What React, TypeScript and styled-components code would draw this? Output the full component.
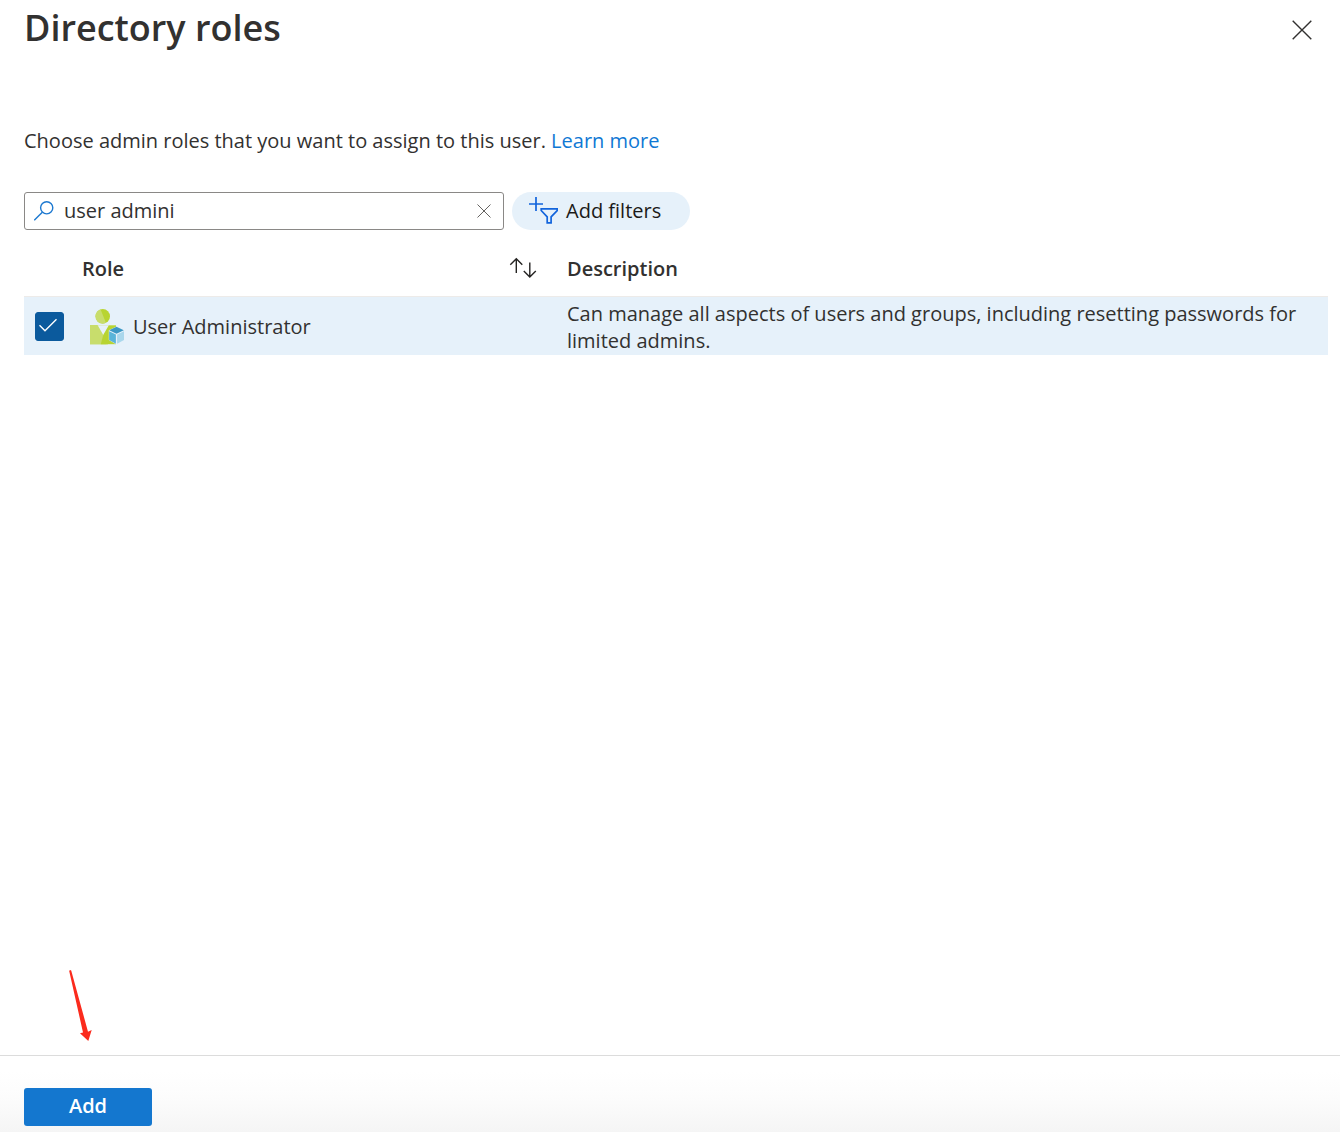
import React, { useState } from "react";
import styled, { createGlobalStyle } from "styled-components";

const GlobalStyle = createGlobalStyle`
  *, *::before, *::after { box-sizing: border-box; }
  body {
    margin: 0;
    background: #ffffff;
    color: #323130;
    font-family: "Segoe UI", "Open Sans", sans-serif;
    font-size: 20px;
    line-height: 27px;
  }
  button, input { font: inherit; color: inherit; }
`;

const Panel = styled.div`
  display: flex;
  flex-direction: column;
  min-height: 100vh;
`;

const Header = styled.header`
  display: flex;
  align-items: center;
  justify-content: space-between;
  height: 60px;
  padding: 0 24px;
`;

const Title = styled.h1`
  margin: 0;
  padding-bottom: 4px;
  font-size: 36px;
  line-height: 56px;
  font-weight: 600;
`;

const IconButton = styled.button`
  display: flex;
  align-items: center;
  justify-content: center;
  flex: none;
  width: 28px;
  height: 28px;
  padding: 0;
  border: 0;
  background: none;
  cursor: pointer;
`;

const Body = styled.main`
  flex: 1;
  padding: 67px 12px 0 24px;
`;

const Intro = styled.p`
  margin: 0 0 38px;
`;

const Link = styled.a`
  color: #0f78d4;
  text-decoration: none;
`;

const Toolbar = styled.div`
  display: flex;
  gap: 8px;
`;

const SearchBox = styled.label`
  display: flex;
  align-items: center;
  gap: 10px;
  width: 480px;
  height: 38px;
  padding: 0 5px 0 9px;
  border: 1px solid #8a8886;
  border-radius: 3px;
`;

const SearchInput = styled.input`
  flex: 1;
  min-width: 0;
  padding: 0 0 2px;
  border: 0;
  outline: 0;
  background: none;
`;

const FilterButton = styled.button`
  display: flex;
  align-items: center;
  gap: 8px;
  width: 178px;
  height: 38px;
  padding: 0 0 2px 16px;
  border: 0;
  border-radius: 19px;
  background: #e6f1fa;
  color: #1b1a19;
  cursor: pointer;
`;

const Table = styled.table`
  width: 100%;
  border-collapse: collapse;
  table-layout: fixed;
`;

const HeadCell = styled.th<{ $width?: number }>`
  width: ${(p) => (p.$width ? `${p.$width}px` : "auto")};
  height: 66px;
  padding: 0 0 14px;
  border-bottom: 1px solid #edebe9;
  vertical-align: bottom;
  text-align: left;
  font-weight: 600;
`;

const SortHead = styled.div`
  display: flex;
  align-items: center;
  justify-content: space-between;
  height: 27px;
  padding-right: 30px;
`;

const Row = styled.tr<{ $selected: boolean }>`
  background: ${(p) => (p.$selected ? "#e6f1fa" : "#ffffff")};
`;

const Cell = styled.td`
  height: 58px;
  padding: 3px 0 1px;
`;

const CheckLabel = styled.label`
  display: grid;
  width: 29px;
  height: 29px;
  margin-left: 11px;

  > * { grid-area: 1 / 1; }
  > svg { pointer-events: none; }
`;

const Checkbox = styled.input`
  appearance: none;
  width: 29px;
  height: 29px;
  margin: 0;
  border: 1px solid #0b5a9d;
  border-radius: 3px;
  cursor: pointer;
  &:checked { background: #0b5a9d; }
`;

const RoleName = styled.div`
  display: flex;
  align-items: center;
  gap: 8px;
  padding-left: 8px;
`;

const Footer = styled.footer`
  position: relative;
  padding: 32px 24px 6px;
  border-top: 1px solid #dcdcdc;
  background: linear-gradient(#ffffff 20%, #fcfcfc 55%, #f5f5f5);
`;

const AddButton = styled.button`
  display: block;
  width: 128px;
  height: 38px;
  padding: 0 0 4px;
  border: 0;
  border-radius: 3px;
  background: #1477cf;
  color: #ffffff;
  font-weight: 600;
  cursor: pointer;
`;

const Pointer = styled.svg`
  position: absolute;
  left: 68px;
  bottom: calc(100% + 13px);
`;

const CloseIcon = ({ size, color }: { size: number; color: string }) => (
  <svg width={size} height={size} viewBox="0 0 20 20" fill="none" stroke={color} strokeWidth="1.4" aria-hidden="true">
    <path d="M.7.7 19.3 19.3M19.3.7.7 19.3" />
  </svg>
);

const SearchIcon = () => (
  <svg width="20" height="20" viewBox="0 0 20 20" fill="none" stroke="#1c78d0" strokeWidth="1.4" aria-hidden="true">
    <circle cx="12.7" cy="6.8" r="6.1" />
    <path d="M8.3 11.2.3 19.2" />
  </svg>
);

const FilterIcon = () => (
  <svg width="30" height="28" viewBox="0 0 30 28" fill="none" stroke="#1264dc" strokeWidth="1.7" aria-hidden="true">
    <path d="M8 1v14M1 8h14" />
    <path d="M13.2 12.8h16v1.7l-6.1 6.4v6h-3.9v-6l-6-6.4z" />
  </svg>
);

const SortIcon = () => (
  <svg width="28" height="22" viewBox="0 0 28 22" fill="none" stroke="#242322" strokeWidth="1.4" aria-hidden="true">
    <path d="M7.3 16V2M1.3 7.8l6-6 6 6" />
    <path d="M20.8 5.5v14.2M14.8 14l6 6 6-6" />
  </svg>
);

const CheckIcon = () => (
  <svg width="29" height="29" viewBox="0 0 29 29" fill="none" stroke="#ffffff" strokeWidth="1.4" aria-hidden="true">
    <path d="M4.5 13.2 10 18.7 21.5 7.2" />
  </svg>
);

const RoleIcon = () => (
  <svg width="35" height="36" viewBox="0 0 35 36" aria-hidden="true">
    <path d="M0 16.3h26v18.9H0z" fill="#b8d432" />
    <path d="M0 16.3h7.6L13.2 26l3.2 9.2H0z" fill="#c8dd6c" />
    <path d="M13.2 26 18 35.2h-7.2z" fill="#b8d432" />
    <path d="M7.6 16.3h11.2L13.2 26z" fill="#e6f1fa" />
    <circle cx="12.8" cy="7.3" r="7.2" fill="#b8d432" />
    <path d="M10.6.5a7.2 7.2 0 1 0 5.3 13.3z" fill="#c8dd6c" />
    <path d="m26.5 17.5 7.8 3.8v9.8l-7.8 4.4-7.7-4.4v-9.8z" fill="#e6f1fa" />
    <path d="m26.5 17.8 7.3 3.5-7.3 3.5-7.3-3.5z" fill="#3c98c5" />
    <path d="m19.1 22.3 6.8 3.2v9.3l-6.8-3.9z" fill="#59b4d9" />
    <path d="m34 22.3-6.9 3.2v9.3l6.9-3.9z" fill="#a9d7ec" />
  </svg>
);

export default function App() {
  const [query, setQuery] = useState("user admini");
  const [selected, setSelected] = useState(true);

  return (
    <>
      <GlobalStyle />
      <Panel>
        <Header>
          <Title>Directory roles</Title>
          <IconButton type="button" aria-label="Close">
            <CloseIcon size={20} color="#323130" />
          </IconButton>
        </Header>
        <Body>
          <Intro>
            Choose admin roles that you want to assign to this user. <Link href="#learn-more">Learn more</Link>
          </Intro>
          <Toolbar>
            <SearchBox>
              <SearchIcon />
              <SearchInput aria-label="Search roles" value={query} onChange={(e) => setQuery(e.target.value)} />
              <IconButton type="button" aria-label="Clear search" onClick={() => setQuery("")}>
                <CloseIcon size={14} color="#605e5c" />
              </IconButton>
            </SearchBox>
            <FilterButton type="button">
              <FilterIcon />
              Add filters
            </FilterButton>
          </Toolbar>
          <Table>
            <thead>
              <tr>
                <HeadCell as="td" $width={58} />
                <HeadCell scope="col" $width={485}>
                  <SortHead>
                    Role
                    <IconButton type="button" aria-label="Sort by role">
                      <SortIcon />
                    </IconButton>
                  </SortHead>
                </HeadCell>
                <HeadCell scope="col">Description</HeadCell>
              </tr>
            </thead>
            <tbody>
              <Row $selected={selected}>
                <Cell>
                  <CheckLabel>
                    <Checkbox
                      type="checkbox"
                      aria-label="Select User Administrator"
                      checked={selected}
                      onChange={(e) => setSelected(e.target.checked)}
                    />
                    {selected && <CheckIcon />}
                  </CheckLabel>
                </Cell>
                <Cell>
                  <RoleName>
                    <RoleIcon />
                    User Administrator
                  </RoleName>
                </Cell>
                <Cell>
                  Can manage all aspects of users and groups, including resetting passwords for limited admins.
                </Cell>
              </Row>
            </tbody>
          </Table>
        </Body>
        <Footer>
          <Pointer width="26" height="74" viewBox="0 0 26 74" aria-hidden="true">
            <path d="M1.2 2 2 1l1.2.6L20 62.7l3.7-1.7-3.4 11-8.3-7.7 3-.8z" fill="#fb2b1d" />
          </Pointer>
          <AddButton type="button">Add</AddButton>
        </Footer>
      </Panel>
    </>
  );
}
